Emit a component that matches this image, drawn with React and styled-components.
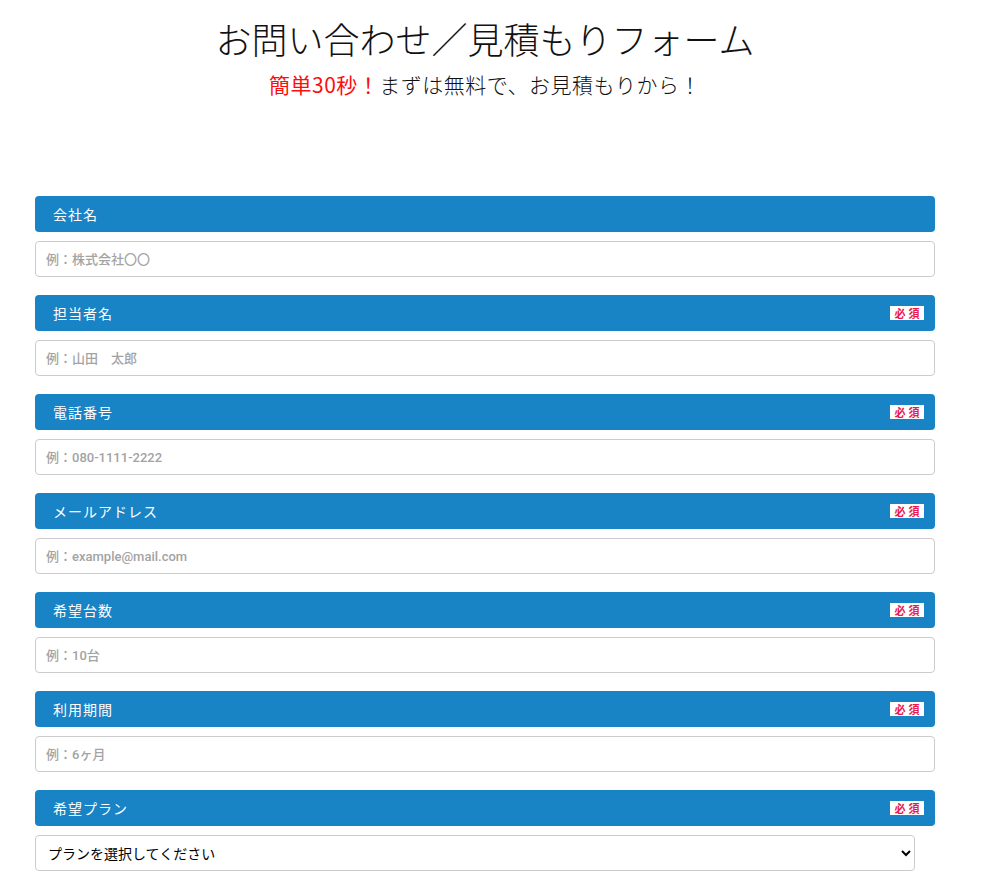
import React from 'react';
import styled, { createGlobalStyle } from 'styled-components';

const GlobalStyle = createGlobalStyle`
  body {
    margin: 0;
    background: #fff;
    font-family: "Noto Sans CJK JP", "Noto Sans", sans-serif;
  }
`;

const Page = styled.div`
  width: 900px;
  margin: 0 0 0 35px;
  padding-top: 12px;
`;

const Title = styled.h1`
  margin: 0;
  text-align: center;
  font-weight: 300;
  font-size: 36px;
  line-height: 52px;
  color: #111;
`;

const Lead = styled.p`
  margin: 4px 0 0;
  text-align: center;
  font-size: 21px;
  font-weight: 300;
  line-height: 32px;
  letter-spacing: 0.5px;
  color: #111;
`;

const Red = styled.span`
  color: #ff0d0d;
  font-weight: 400;
`;

const Form = styled.form`
  margin-top: 96px;
  display: flex;
  flex-direction: column;
  gap: 18px;
`;

const Field = styled.div`
  display: flex;
  flex-direction: column;
  gap: 9px;
`;

const Head = styled.div`
  height: 36px;
  border-radius: 4px;
  background: #1883c5;
  color: #fff;
  display: flex;
  align-items: center;
  justify-content: space-between;
  padding: 0 11px 0 18px;
  font-size: 14px;
  line-height: 1;
  letter-spacing: 1px;
`;

const Badge = styled.span`
  background: #fff;
  color: #e8194d;
  font-size: 11px;
  font-weight: 700;
  line-height: 14px;
  width: 34px;
  text-align: center;
  letter-spacing: 3px;
  padding-left: 3px;
  box-sizing: border-box;
`;

const Input = styled.input`
  height: 36px;
  box-sizing: border-box;
  border: 1px solid #ccc;
  border-radius: 4px;
  padding: 0 10px;
  font-family: Roboto, "Noto Sans CJK JP", sans-serif;
  font-size: 13px;
  &::placeholder {
    color: #a3a3a3;
    font-weight: 500;
  }
`;

const Select = styled.select`
  width: 880px;
  height: 36px;
  box-sizing: border-box;
  border: 1px solid #ccc;
  border-radius: 4px;
  padding: 0 8px;
  background: #fff;
  font-family: "Noto Sans CJK JP", sans-serif;
  font-size: 14px;
  color: #000;
`;

const fields = [
  { label: '会社名', ph: '例：株式会社〇〇' },
  { label: '担当者名', ph: '例：山田　太郎', req: true },
  { label: '電話番号', ph: '例：080-1111-2222', req: true },
  { label: 'メールアドレス', ph: '例：example@mail.com', req: true },
  { label: '希望台数', ph: '例：10台', req: true },
  { label: '利用期間', ph: '例：6ヶ月', req: true },
];

export default function App() {
  return (
    <Page>
      <GlobalStyle />
      <Title>お問い合わせ／見積もりフォーム</Title>
      <Lead><Red>簡単30秒！</Red>まずは無料で、お見積もりから！</Lead>
      <Form>
        {fields.map((f) => (
          <Field key={f.label}>
            <Head>
              {f.label}
              {f.req && <Badge>必須</Badge>}
            </Head>
            <Input type='text' placeholder={f.ph} />
          </Field>
        ))}
        <Field>
          <Head>
            希望プラン
            <Badge>必須</Badge>
          </Head>
          <Select defaultValue=''>
            <option value=''>プランを選択してください</option>
          </Select>
        </Field>
      </Form>
    </Page>
  );
}
